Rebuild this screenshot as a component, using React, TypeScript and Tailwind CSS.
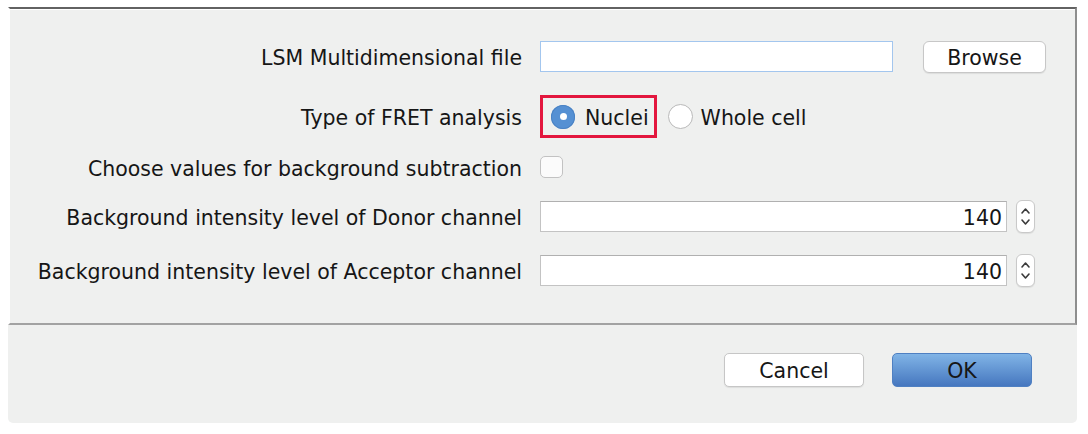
import React from 'react';

function Spinner() {
  return (
    <div className="ml-[9px] flex h-[33px] w-[19px] items-center justify-center rounded-[6px] border border-[#c9c9c9] bg-white shadow-[0_1px_1px_rgba(0,0,0,0.08)]">
      <svg width="17" height="31" viewBox="0 0 17 31" fill="none">
        <path d="M5 12 L8.5 8 L12 12" stroke="#3a3a3a" strokeWidth="1.6" strokeLinecap="round" strokeLinejoin="round" />
        <path d="M5 19 L8.5 23 L12 19" stroke="#3a3a3a" strokeWidth="1.6" strokeLinecap="round" strokeLinejoin="round" />
      </svg>
    </div>
  );
}

function NumberRow({ value }: { value: string }) {
  return (
    <div className="flex h-[33px] items-center">
      <div className="flex h-[31px] w-[467px] items-center justify-end border border-[#c3c3c3] border-t-[#b0b0b0] bg-white pt-[4px] pr-[4px] leading-none">
        {value}
      </div>
      <Spinner />
    </div>
  );
}

export default function App() {
  const label = 'text-right leading-none pt-[4px]';

  return (
    <div className="min-h-[434px] bg-white pt-[7px] pl-[8px] font-['DejaVu_Sans',sans-serif] text-[20.5px] text-[#161616]">
      <div className="w-[1069px]">
        {/* upper panel */}
        <div className="border-t-2 border-r-2 border-b-2 border-l-2 border-t-[#626262] border-r-[#8e8e8e] border-b-[#a2a2a2] border-l-white bg-[#eff0ef]">
          <div className="border-t border-white pt-[31px] pb-[36px]">
            <div className="grid grid-cols-[512px_1fr] gap-x-[18px]">
              <div className={`${label} flex h-[31px] items-center justify-end`}>LSM Multidimensional file</div>
              <div className="flex h-[31px] items-center">
                <div className="h-[31px] w-[353px] border border-[#a3c6ee] bg-white" />
                <button className="ml-[30px] h-[32px] w-[123px] rounded-[6px] border border-[#c7c7c7] bg-white pt-[3px] leading-none shadow-[0_1px_1px_rgba(0,0,0,0.08)]">
                  Browse
                </button>
              </div>

              <div className={`${label} mt-[23px] flex h-[43px] items-center justify-end`}>Type of FRET analysis</div>
              <div className="mt-[23px] flex h-[43px] items-center">
                <div className="flex h-[43px] items-center border-[3px] border-[#e3173e] pr-[5px] pl-[8px]">
                  <div className="flex h-[24px] w-[24px] items-center justify-center rounded-full bg-[#5590d3] shadow-[inset_0_0_0_1px_#4a82c4]">
                    <div className="h-[7px] w-[7px] rounded-full bg-white" />
                  </div>
                  <span className="ml-[10px] pt-[3px] leading-none">Nuclei</span>
                </div>
                <div className="ml-[11px] h-[25px] w-[25px] rounded-full border border-[#b9b9b9] bg-white" />
                <span className="ml-[8px] pt-[3px] leading-none">Whole cell</span>
              </div>

              <div className={`${label} mt-[18px] flex h-[22px] items-center justify-end`}>Choose values for background subtraction</div>
              <div className="mt-[18px] flex h-[22px] items-center">
                <div className="h-[22px] w-[23px] rounded-[5px] border border-[#c2c2c2] bg-[#fbfbfb]" />
              </div>

              <div className={`${label} mt-[22px] flex h-[33px] items-center justify-end`}>Background intensity level of Donor channel</div>
              <div className="mt-[22px]">
                <NumberRow value="140" />
              </div>

              <div className={`${label} mt-[21px] flex h-[33px] items-center justify-end`}>Background intensity level of Acceptor channel</div>
              <div className="mt-[21px]">
                <NumberRow value="140" />
              </div>
            </div>
          </div>
        </div>

        {/* lower panel */}
        <div className="flex h-[98px] justify-end gap-[28px] rounded-b-[5px] bg-[#eff0ef] pt-[28px] pr-[45px]">
          <button className="h-[34px] w-[140px] rounded-[5px] border border-[#c6c6c6] bg-white pt-[3px] leading-none shadow-[0_1px_1px_rgba(0,0,0,0.08)]">
            Cancel
          </button>
          <button className="h-[34px] w-[140px] rounded-[5px] border border-[#4f80c2] bg-gradient-to-b from-[#81b4e6] to-[#4677bf] pt-[3px] leading-none">
            OK
          </button>
        </div>
      </div>
    </div>
  );
}
